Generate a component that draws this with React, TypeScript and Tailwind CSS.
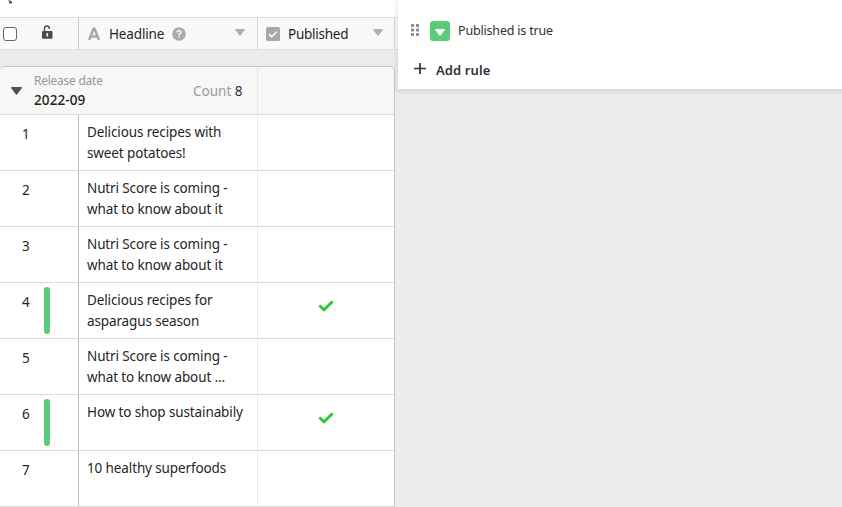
import React from "react";

type Row = { id: number; lines: string[]; published?: boolean };

const rows: Row[] = [
  { id: 1, lines: ["Delicious recipes with", "sweet potatoes!"] },
  { id: 2, lines: ["Nutri Score is coming -", "what to know about it"] },
  { id: 3, lines: ["Nutri Score is coming -", "what to know about it"] },
  { id: 4, lines: ["Delicious recipes for", "asparagus season"], published: true },
  { id: 5, lines: ["Nutri Score is coming -", "what to know about ..."] },
  { id: 6, lines: ["How to shop sustainabily"], published: true },
  { id: 7, lines: ["10 healthy superfoods"] },
];

function Caret({ className }: { className: string }) {
  return (
    <svg className={className} viewBox="0 0 10 7" preserveAspectRatio="none">
      <path d="M.7 0h8.6c.6 0 .9.6.5 1L5.5 6.6a.7.7 0 0 1-1 0L.2 1C-.2.6.1 0 .7 0z" fill="currentColor" />
    </svg>
  );
}

function Check() {
  return (
    <svg className="mt-[17px] h-3 w-4" viewBox="0 0 16 12" fill="none">
      <path d="M2.2 6.200l3.800 3.600L13.800 2.300" stroke="#28c935" strokeWidth="2.8" strokeLinecap="round" />
    </svg>
  );
}

function ColumnHeader() {
  return (
    <div className="flex h-[33px] w-[398px] border-y border-[#dedede] bg-[#f9f9f9]">
      <div className="flex w-[79px] items-center border-r border-[#c6c6c6] pl-[3px]">
        <span className="h-3.5 w-3.5 rounded-[3px] border border-[#666] bg-white" />
        <svg className="mb-[3px] ml-[24px] h-[14px] w-3" viewBox="0 0 12 14">
          <path d="M3.5 6V3.6a2.4 2.4 0 0 1 4.8-.4V4" fill="none" stroke="#4a4a4a" strokeWidth="1.4" />
          <rect x="1" y="6" width="10.5" height="7.7" rx="1" fill="#4a4a4a" />
          <path d="M6.3 8v3.5" stroke="#fff" strokeWidth="1.6" />
        </svg>
      </div>
      <div className="flex w-[179px] items-center border-r border-[#d4d4d4] pl-2">
        <svg className="h-3.5 w-3.5" viewBox="0 0 14 14" fill="none" stroke="#a7a8aa" strokeWidth="2.5">
          <path d="M2.200 13L6.500 1.800h1L12 13M4 9.500h6" />
        </svg>
        <span className="ml-2 w-[55px] whitespace-nowrap pt-0.5 text-[13.5px] tracking-[-0.15px] text-[#1d1f25]">Headline</span>
        <svg className="ml-2 h-3.5 w-3.5" viewBox="0 0 14 14">
          <circle cx="7" cy="7" r="6.8" fill="#a9aaac" />
          <path d="M5 5.600c0-2.800 4-2.400 4-.2 0 1.300-2 1.300-2 2.800M7 9.200v1.600" fill="none" stroke="#fff" strokeWidth="1.500" />
        </svg>
        <Caret className="ml-[49px] mb-0.5 h-[7px] w-2.5 text-[#b0b0b0]" />
      </div>
      <div className="flex w-[137px] items-center border-r border-[#d4d4d4] pl-2">
        <svg className="h-3.5 w-3.5" viewBox="0 0 14 14">
          <rect width="14" height="14" rx="1.500" fill="#a7a8aa" />
          <path d="M3 7l2.700 2.700L11 4.500" fill="none" stroke="#fff" strokeWidth="1.600" />
        </svg>
        <span className="ml-2 w-[60px] whitespace-nowrap pt-0.5 text-[13.5px] tracking-[-0.25px] text-[#1d1f25]">Published</span>
        <Caret className="ml-[25px] mb-0.5 h-[7px] w-2.5 text-[#b0b0b0]" />
      </div>
    </div>
  );
}

function GroupHeader() {
  return (
    <div className="flex h-12 border-b border-[#dadada] bg-[#f7f7f7]">
      <div className="flex w-[258px] border-r border-[#e6e6e6]">
        <Caret className="ml-[11px] mt-5 h-2 w-[11px] text-[#505050]" />
        <div className="ml-3 mt-[5px] w-[159px] whitespace-nowrap">
          <div className="text-[12px] leading-[18px] tracking-[-0.25px] text-[#959996]">Release date</div>
          <div className="text-[13.5px] font-medium leading-5 tracking-[0.1px] text-[#202020]">2022-09</div>
        </div>
        <div className="mt-[14px] whitespace-nowrap text-[13.5px] leading-5 text-[#999]">
          Count <span className="text-[#333]">8</span>
        </div>
      </div>
    </div>
  );
}

function TableRow({ row }: { row: Row }) {
  return (
    <div className="flex h-14 border-b border-[#dadada] bg-white text-[#252525]">
      <div className="flex w-[79px] border-r border-[#bdbdbd]">
        <span className="w-[44px] pl-[22px] pt-[9px] text-[13.500px] leading-5">{row.id}</span>
        {row.published && <span className="mt-1 h-[47px] w-1.5 rounded-full bg-[#5acc77]" />}
      </div>
      <div className="w-[179px] border-r border-[#ededed] pl-2 pt-[7px] text-[13.5px] leading-[21px] tracking-[-0.12px]">
        {row.lines.map((line) => (
          <div className="whitespace-nowrap" key={line}>{line}</div>
        ))}
      </div>
      <div className="flex flex-1 justify-center">{row.published && <Check />}</div>
    </div>
  );
}

function FilterPanel() {
  return (
    <div className="absolute left-[398px] top-0 h-[89px] w-[460px] bg-white pt-[21px] text-[#303136] shadow-[0_1px_5px_1px_rgba(50,55,80,0.14)]">
      <div className="flex h-5 items-center">
        <svg className="mb-0.5 ml-[13px] h-3 w-2" viewBox="0 0 8 12" fill="#909090">
          <path d="M0 0h3v3H0zM5 0h3v3H5zM0 4.500h3v3H0zM5 4.500h3v3H5zM0 9h3v3H0zM5 9h3v3H5z" />
        </svg>
        <span className="ml-[11px] flex h-5 w-5 items-center justify-center rounded-[3px] bg-[#5acc77]">
          <Caret className="mt-0.5 h-[7px] w-2.5 text-white" />
        </span>
        <span className="ml-2 whitespace-nowrap pt-px text-[12.5px] tracking-[-0.18px]">Published is true</span>
      </div>
      <div className="mt-[19px] flex h-5 items-center">
        <svg className="mb-[3px] ml-4 h-[11px] w-3" viewBox="0 0 12 11" fill="none" stroke="#303136" strokeWidth="1.700">
          <path d="M0 5.500h12M6 0v11" />
        </svg>
        <span className="ml-2.5 whitespace-nowrap pt-0.5 text-[13px] font-semibold tracking-[0.1px]">Add rule</span>
      </div>
    </div>
  );
}

export default function App() {
  return (
    <div className="relative h-[507px] w-[842px] overflow-hidden bg-[#ececec] font-['Noto_Sans','Open_Sans',sans-serif]">
      <div className="h-[17px] w-[398px] bg-white">
        <svg className="ml-[7px] h-1 w-1.5" viewBox="0 0 6 4">
          <path d="M0 0l3 .5 2 1v2H2V1z" fill="#6b5852" />
        </svg>
      </div>
      <ColumnHeader />
      <div className="mt-4 w-[395px] overflow-hidden rounded-t-[5px] border-r border-t border-[#c4c4c4]">
        <GroupHeader />
        {rows.map((row) => (
          <TableRow key={row.id} row={row} />
        ))}
      </div>
      <FilterPanel />
    </div>
  );
}
